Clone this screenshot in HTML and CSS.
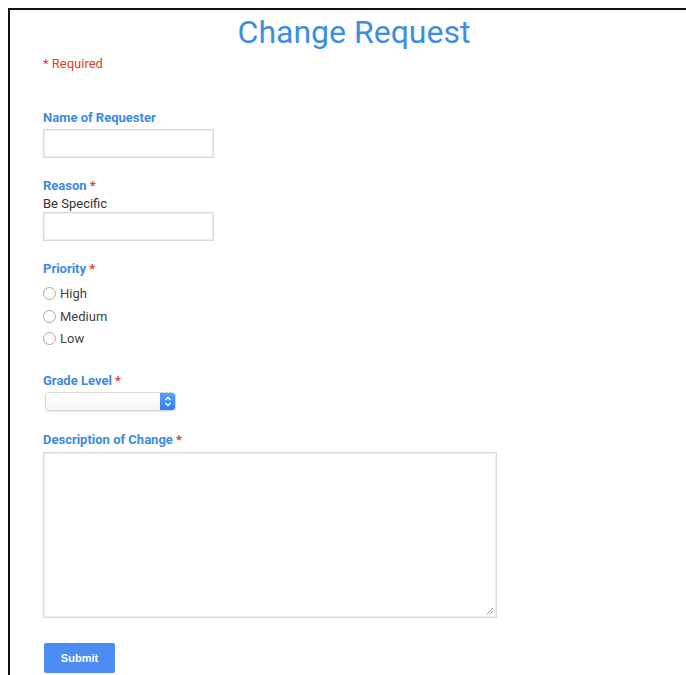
FILE: index.html
```html
<!DOCTYPE html>
<html lang="en">
<head>
<meta charset="utf-8">
<title>Change Request</title>
<link rel="stylesheet" href="styles.css">
</head>
<body>
<div class="frame">
  <form class="form">
    <h1 class="title">Change Request</h1>
    <p class="required-note">* Required</p>

    <div class="field field-name">
      <label class="label" for="requester">Name of Requester</label>
      <input class="text-input" id="requester" type="text">
    </div>

    <div class="field field-reason">
      <label class="label" for="reason">Reason <span class="star">*</span></label>
      <div class="help">Be Specific</div>
      <input class="text-input" id="reason" type="text">
    </div>

    <div class="field field-priority">
      <div class="label">Priority <span class="star">*</span></div>
      <label class="radio"><span class="circle"></span>High</label>
      <label class="radio"><span class="circle"></span>Medium</label>
      <label class="radio"><span class="circle"></span>Low</label>
    </div>

    <div class="field field-grade">
      <div class="label">Grade Level <span class="star">*</span></div>
      <div class="select">
        <span class="select-body"></span>
        <span class="select-arrows">
          <svg width="8" height="11" viewBox="0 0 8 11"><path d="M1.5 4 L4 1.5 L6.5 4 M1.5 7 L4 9.5 L6.5 7" fill="none" stroke="#fff" stroke-width="1.3"/></svg>
        </span>
      </div>
    </div>

    <div class="field field-desc">
      <div class="label">Description of Change <span class="star">*</span></div>
      <div class="textarea">
        <svg class="grip" width="8" height="8" viewBox="0 0 8 8"><path d="M7 1 L1 7 M7 4 L4 7" stroke="#999" stroke-width="1"/></svg>
      </div>
    </div>

    <button class="submit" type="button">Submit</button>
  </form>
</div>
</body>
</html>
```

FILE: styles.css
```css
html, body {
  margin: 0;
  padding: 0;
  background: #fff;
  overflow: hidden;
}

body {
  font-family: Roboto, "Liberation Sans", Arial, sans-serif;
  color: #333;
}

/* outer frame: rule on the top and left edges only */
.frame {
  box-sizing: border-box;
  margin: 8px 0 0 8px;
  border-top: 2px solid #111;
  border-left: 2px solid #111;
  height: calc(100vh - 8px);
}

.form {
  padding: 0 0 0 33px;
}

.title {
  box-sizing: border-box;
  margin: 3px 0 0 -43px;
  padding-left: 22px;
  width: 686px;
  text-align: center;
  font-weight: 400;
  font-size: 32px;
  line-height: 38px;
  color: #3b8ee3;
}

.required-note {
  margin: 5px 0 0;
  font-size: 13px;
  line-height: 16px;
  color: #d2442d;
}

.label {
  display: block;
  font-size: 13px;
  font-weight: 700;
  line-height: 16px;
  color: #3d8ae0;
}

.star {
  color: #d2442d;
}

.field-name { margin-top: 38px; }
.field-reason { margin-top: 20px; }
.field-priority { margin-top: 20px; }
.field-grade { margin-top: 26px; }
.field-desc { margin-top: 21px; }

.text-input {
  display: block;
  box-sizing: border-box;
  width: 171px;
  height: 29px;
  margin-top: 3px;
  border: 1px solid #d9d9d9;
  box-shadow: inset 0 0 0 1px #efefef;
  background: #fff;
  padding: 0;
}

.field-reason .text-input { margin-top: 0; }

.help {
  margin-top: 2px;
  font-size: 13px;
  line-height: 16px;
  color: #333;
}

.radio {
  display: flex;
  align-items: center;
  gap: 4px;
  margin-top: 5.5px;
  height: 17px;
  font-size: 13px;
  color: #444;
}

.field-priority .radio:first-of-type { margin-top: 8px; }

.circle {
  box-sizing: border-box;
  width: 13px;
  height: 13px;
  border-radius: 50%;
  border: 1px solid #aaa;
  background: #fff;
}

.select {
  display: flex;
  margin: 3px 0 0 2px;
  width: 131px;
  height: 19px;
  box-sizing: border-box;
  border-radius: 4px;
  border: 1px solid #d6d6d6;
  overflow: hidden;
  box-shadow: 0 1px 1px rgba(0,0,0,0.08);
}

.select-body {
  flex: 1;
  background: linear-gradient(#fff, #f6f6f6);
}

.select-arrows {
  width: 15px;
  display: flex;
  align-items: center;
  justify-content: center;
  background: linear-gradient(#5aa0fb, #2f7df0);
}

.textarea {
  position: relative;
  box-sizing: border-box;
  width: 454px;
  height: 166px;
  margin-top: 4px;
  border: 1px solid #d9d9d9;
  box-shadow: inset 0 0 0 1px #efefef;
  background: #fff;
}

.grip {
  position: absolute;
  right: 2px;
  bottom: 2px;
}

.submit {
  display: block;
  margin: 25px 0 0 1px;
  width: 71px;
  height: 30px;
  border: none;
  border-radius: 2px;
  background: #4b8df5;
  color: #fff;
  font-family: "Liberation Sans", Arial, sans-serif;
  font-weight: 700;
  font-size: 11px;
  padding: 0;
}
```
